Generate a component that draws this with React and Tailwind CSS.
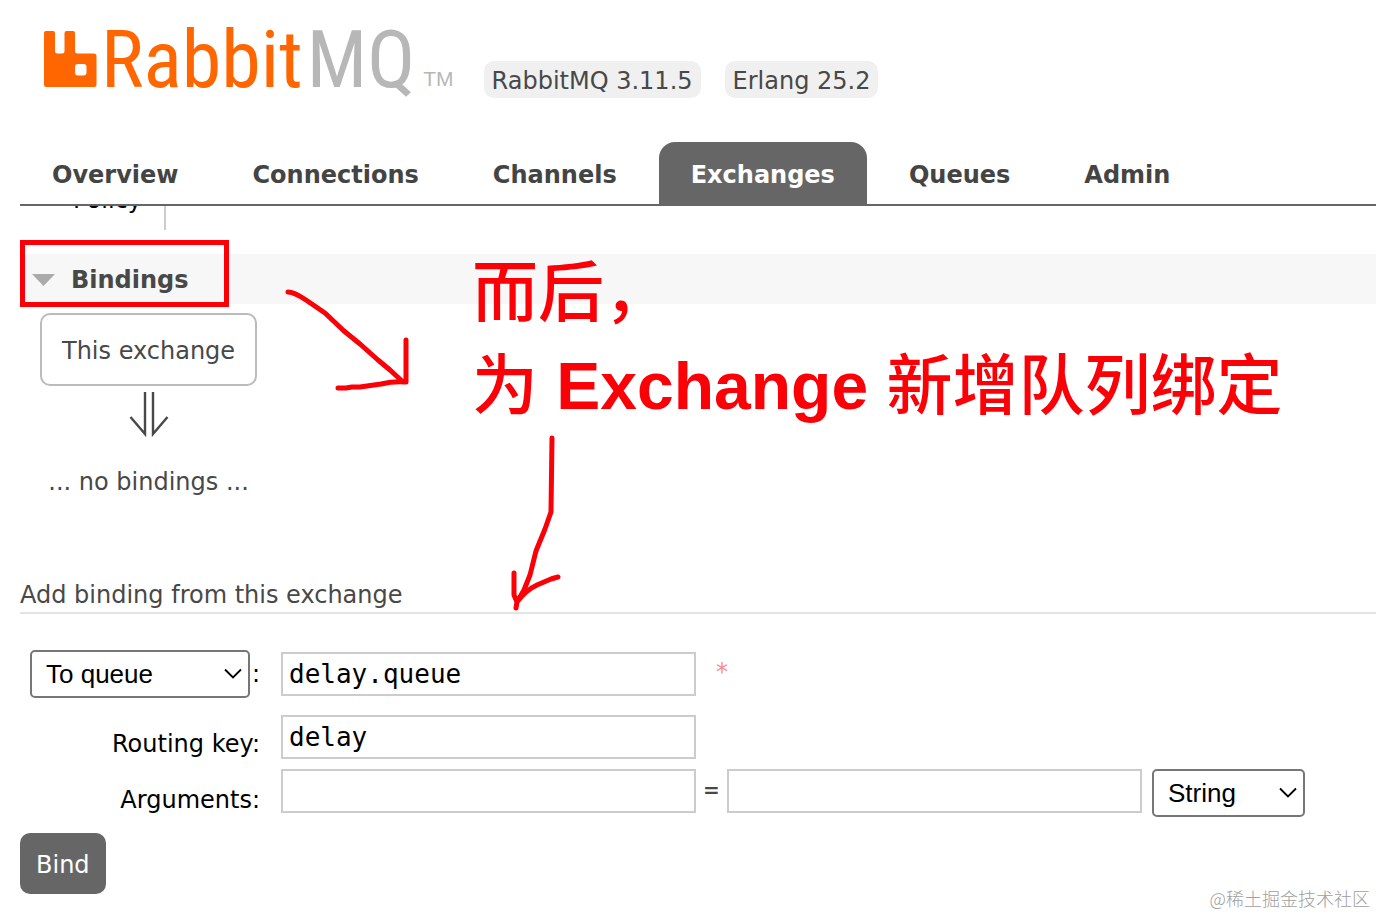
import React from "react";

const tabs = ["Overview", "Connections", "Channels", "Exchanges", "Queues", "Admin"];

function Logo() {
  return (
    <a href="#/" aria-label="RabbitMQ" className="flex h-[64px] items-start">
      <svg className="mt-[3px] h-[56px] w-[53px] shrink-0" viewBox="0 0 53 56" aria-hidden="true">
        <path
          fill="#ff6600"
          fillRule="evenodd"
          d="M2 0H9Q11 0 11 2V20Q11 22.500 13.500 22.500H18Q20.500 22.500 20.500 20V2Q20.500 0 22.500 0H29Q31 0 31 2V20Q31 22.500 33.500 22.500H50Q52.500 22.500 52.500 25V53.500Q52.500 56 50 56H2.500Q0 56 0 53.500V2Q0 0 2 0ZM34 33Q31 33 31 36V41.500Q31 44.500 34 44.500H39.500Q42.500 44.500 42.500 41.500V36Q42.500 33 39.500 33Z"
        />
      </svg>
      <span className="ml-1 flex gap-1 font-['Roboto_Condensed','Liberation_Sans_Narrow',Lato,sans-serif] text-[80px] leading-[64px] text-[#ff6600]">
        <span>Rabbit</span>
        <span className="text-[#b7b7b7]">MQ</span>
      </span>
      <span className="ml-2 mt-[38px] font-['Liberation_Sans',sans-serif] text-[21px] leading-[26px] text-[#b7b7b7]">TM</span>
    </a>
  );
}

function Chevron() {
  return (
    <svg className="pointer-events-none absolute right-2 top-[18px] h-3 w-[18px]" viewBox="0 0 18 12" fill="none" aria-hidden="true">
      <path d="M1 1.500L9 9.500L17 1.500" stroke="#000" strokeWidth="1.800" />
    </svg>
  );
}

function Select({ label, options, className }) {
  return (
    <div className={"relative " + className}>
      <select
        aria-label={label}
        className="block h-12 w-full appearance-none rounded-[5px] border-2 border-[#767676] bg-white pl-[14px] font-['Liberation_Sans',sans-serif] text-[26px] leading-[32px] text-black"
      >
        {options.map((o) => (
          <option key={o}>{o}</option>
        ))}
      </select>
      <Chevron />
    </div>
  );
}

const inputClass =
  "block h-11 w-[415px] min-w-0 border-2 border-[#cccccc] bg-white px-[6px] font-['DejaVu_Sans_Mono',monospace] text-[26px] text-black";

export default function App() {
  return (
    <div className="relative min-h-screen w-full overflow-hidden bg-white pl-5 font-['DejaVu_Sans',sans-serif] text-[24px] leading-[30px] text-[#484848]">
      <header className="flex items-start pl-6 pt-7">
        <Logo />
        <div className="ml-[30px] mt-[33px] flex gap-6">
          <span className="rounded-[10px] bg-[#f0f0f0] px-2 pb-[2px] pt-[5px]">RabbitMQ 3.11.5</span>
          <span className="rounded-[10px] bg-[#f0f0f0] px-2 pb-[2px] pt-[5px]">Erlang 25.2</span>
        </div>
      </header>

      <nav className="mt-11 flex gap-[10px] border-b-2 border-[#666666] font-bold">
        {tabs.map((t) => (
          <a
            key={t}
            href={"#/" + t.toLowerCase()}
            className={
              t === "Exchanges"
                ? "rounded-t-[16px] bg-[#666666] px-8 pb-[14px] pt-[18px] text-white"
                : "px-8 pb-[14px] pt-[18px] text-[#444444]"
            }
          >
            {t}
          </a>
        ))}
      </nav>

      <div className="flex h-6 w-[146px] items-start justify-end overflow-hidden border-r-2 border-[#cccccc] pr-[22px] text-black">
        <span className="-mt-[21px]">Policy</span>
      </div>

      <section>
        <h2 className="relative mt-6 bg-[#f7f7f7] pb-[9px] pt-[11px] font-bold">
          <button type="button" className="flex items-center gap-4 pl-3">
            <svg className="h-3 w-[23px]" viewBox="0 0 23 12" aria-hidden="true">
              <path d="M0 0H23L11.500 12Z" fill="#aaaaaa" />
            </svg>
            Bindings
          </button>
          <span className="pointer-events-none absolute -top-[14px] left-0 h-[67px] w-[209px] border-[5px] border-[#fb0007]" />
        </h2>

        <div className="ml-5 mt-[9px] flex w-fit flex-col items-center">
          <div className="rounded-[10px] border-2 border-[#bbbbbb] px-5 pb-[18px] pt-[21px]">This exchange</div>
          <svg className="mt-[5px] h-[48px] w-[40px]" viewBox="0 0 40 48" fill="none" stroke="#484848" strokeWidth="2.400" aria-hidden="true">
            <path d="M16 1V43L1.500 26M24 1V43L38.500 26" />
          </svg>
          <p className="mt-7">... no bindings ...</p>
        </div>
      </section>

      <section>
        <h3 className="mt-[83px] border-b-2 border-[#e4e4e4] pb-[2px]">Add binding from this exchange</h3>
        <form className="mt-9" onSubmit={(e) => e.preventDefault()}>
          <div className="grid grid-cols-[240px_1fr] gap-x-[21px] text-black">
            <div className="flex items-center justify-end pl-[10px]">
              <Select label="Destination type" options={["To queue", "To exchange"]} className="flex-1" />
              <label htmlFor="destination" className="pl-[2px]">:</label>
            </div>
            <div className="flex items-center gap-5">
              <input id="destination" className={inputClass} defaultValue="delay.queue" />
              <span className="pb-1 text-[#f88e8e]">*</span>
            </div>

            <label htmlFor="routing" className="mt-[31px] text-right">Routing key:</label>
            <div className="mt-[17px]">
              <input id="routing" className={inputClass} defaultValue="delay" />
            </div>

            <label htmlFor="argument" className="mt-[26px] text-right">Arguments:</label>
            <div className="mt-[10px] flex items-start">
              <input id="argument" className={inputClass} />
              <span className="w-[31px] pt-[6px] text-center text-[20px] font-bold text-[#484848]">=</span>
              <input aria-label="Argument value" className={inputClass} />
              <Select label="Argument type" options={["String", "Number", "Boolean", "List"]} className="ml-[10px] w-[153px]" />
            </div>
          </div>
          <button type="submit" className="mt-4 rounded-[10px] bg-[#666666] px-4 pb-[14px] pt-[17px] text-white">
            Bind
          </button>
        </form>
      </section>

      <p className="pointer-events-none absolute left-[472px] top-[247px] whitespace-nowrap font-['Liberation_Sans','Noto_Sans_CJK_SC',sans-serif] text-[66px] font-medium leading-[93px] text-[#fb0007]">
        而后，
        <br />为 <span className="font-bold">Exchange</span> 新增队列绑定
      </p>
      <svg
        className="pointer-events-none absolute left-[280px] top-[280px] h-[340px] w-[290px]"
        viewBox="280 280 290 340"
        fill="none"
        stroke="#fb0007"
        strokeWidth="5"
        strokeLinecap="round"
        strokeLinejoin="round"
        aria-hidden="true"
      >
        <path d="M288 292Q294 292 306 300L325 313L344 331L360 344L378 360L390 370L403 382M406 340V382Q394 381 381 384L360 387H352L346 388H338" />
        <path d="M552 438L551 512L545 529L536 551L530 575L524 590L517 602L516 608M514 573V595L517 602Q526 590 537 585L551 579L558 577" />
      </svg>

      <span className="pointer-events-none absolute bottom-[6px] right-[6px] font-['Noto_Sans_CJK_SC',sans-serif] text-[18px] font-light leading-[24px] text-[#a0a0a0]">
        @稀土掘金技术社区
      </span>
    </div>
  );
}
